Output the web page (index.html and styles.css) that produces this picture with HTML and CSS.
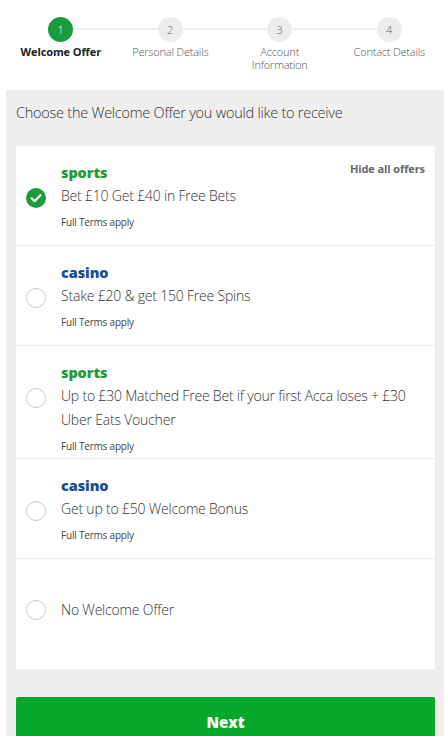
FILE: index.html
```html
<!DOCTYPE html>
<html>
<head>
<meta charset="utf-8">
<link rel="stylesheet" href="styles.css">
</head>
<body>
<div class="page">
  <ol class="stepper">
    <li class="step active"><span class="dot">1</span><span class="label">Welcome Offer</span></li>
    <li class="step"><span class="dot">2</span><span class="label">Personal Details</span></li>
    <li class="step"><span class="dot">3</span><span class="label">Account<br>Information</span></li>
    <li class="step last"><span class="dot">4</span><span class="label">Contact Details</span></li>
  </ol>
  <div class="panel">
    <p class="title">Choose the Welcome Offer you would like to receive</p>
    <div class="card">
      <div class="offer">
        <span class="radio checked"><svg viewBox="0 0 20 20" width="20" height="20"><circle cx="10" cy="10" r="10" fill="#1a9b3c"/><path d="M5.6 10.3l3 2.9 5.8-6" fill="none" stroke="#fff" stroke-width="2.2" stroke-linecap="round" stroke-linejoin="round"/></svg></span>
        <div class="body">
          <div class="cat sports">sports</div>
          <div class="desc">Bet £10 Get £40 in Free Bets</div>
          <div class="terms">Full Terms apply</div>
        </div>
        <span class="hide">Hide all offers</span>
      </div>
      <div class="offer">
        <span class="radio"></span>
        <div class="body">
          <div class="cat casino">casino</div>
          <div class="desc">Stake £20 &amp; get 150 Free Spins</div>
          <div class="terms">Full Terms apply</div>
        </div>
      </div>
      <div class="offer">
        <span class="radio"></span>
        <div class="body">
          <div class="cat sports">sports</div>
          <div class="desc">Up to £30 Matched Free Bet if your first Acca loses + £30 Uber Eats Voucher</div>
          <div class="terms">Full Terms apply</div>
        </div>
      </div>
      <div class="offer">
        <span class="radio"></span>
        <div class="body">
          <div class="cat casino">casino</div>
          <div class="desc">Get up to £50 Welcome Bonus</div>
          <div class="terms">Full Terms apply</div>
        </div>
      </div>
      <div class="offer none">
        <span class="radio"></span>
        <div class="body">
          <div class="desc">No Welcome Offer</div>
        </div>
      </div>
    </div>
    <button class="next">Next</button>
  </div>
</div>
</body>
</html>
```
FILE: styles.css
```css
* { box-sizing: border-box; }
html, body { margin: 0; padding: 0; background: #fff; }
body { font-family: "Open Sans", "Liberation Sans", sans-serif; color: #333; overflow: hidden; }
.page { padding: 0 3px 0 6px; }

.stepper {
  list-style: none;
  margin: 0;
  padding: 17px 0 0 0;
  display: grid;
  grid-template-columns: repeat(4, 1fr);
  height: 90px;
}
.step {
  position: relative;
  display: flex;
  flex-direction: column;
  align-items: center;
}
.step::after {
  content: "";
  position: absolute;
  top: 11px;
  left: 50%;
  width: 100%;
  height: 2px;
  background: #ececec;
  z-index: 0;
}
.step.last::after { display: none; }
.dot {
  position: relative;
  z-index: 1;
  width: 25px;
  height: 25px;
  border-radius: 50%;
  background: #ececec;
  color: #666;
  font-size: 11px;
  line-height: 25px;
  text-align: center;
  font-weight: 300;
}
.step.active .dot { background: #1a9b3c; color: #fff; }
.label {
  margin-top: 3px;
  font-size: 11px;
  line-height: 13px;
  text-align: center;
  color: #555;
  font-weight: 300;
  letter-spacing: -0.2px;
}
.step.active .label { color: #222; font-weight: 700; letter-spacing: -0.1px; }

.panel {
  background: #eeeeee;
  padding: 13px 9px 0 10px;
  height: 660px;
}
.title {
  margin: 0;
  font-size: 14.5px;
  line-height: 20px;
  font-weight: 300;
  color: #333;
  letter-spacing: -0.25px;
}
.card {
  margin-top: 23px;
  background: #fff;
}
.offer {
  position: relative;
  display: flex;
  align-items: flex-start;
  min-height: 100px;
  padding: 16px 12px 2px 10px;
  border-bottom: 1px solid #ececec;
}
.offer:last-child { border-bottom: none; }
.radio {
  flex: none;
  width: 20px;
  height: 20px;
  border-radius: 50%;
  border: 1px solid #c8c8c8;
  margin-top: 26px;
  margin-right: 15px;
  background: #fff;
}
.radio.checked { border: none; }
.radio svg { display: block; }
.body { flex: 1; }
.cat {
  font-size: 14.5px;
  line-height: 22px;
  font-weight: 800;
  letter-spacing: -0.1px;
}
.cat.sports { color: #1a9b3c; }
.cat.casino { color: #14528f; }
.desc {
  font-size: 14px;
  line-height: 24px;
  font-weight: 300;
  color: #333;
  letter-spacing: -0.2px;
}
.terms {
  margin-top: 4px;
  font-size: 10px;
  line-height: 20px;
  color: #444;
  letter-spacing: -0.2px;
}
.hide {
  position: absolute;
  top: 15px;
  right: 10px;
  font-size: 11px;
  font-weight: 700;
  color: #666;
  letter-spacing: -0.1px;
}
.offer.none { min-height: 110px; padding-top: 39px; padding-bottom: 47px; }
.offer.none .radio { margin-top: 2px; }

.next {
  display: block;
  width: 100%;
  margin-top: 28px;
  height: 50px;
  border: none;
  border-radius: 2px;
  background: #05a82a;
  color: #fff;
  font-family: "Open Sans", "Liberation Sans", sans-serif;
  font-size: 15px;
  font-weight: 800;
}
```
